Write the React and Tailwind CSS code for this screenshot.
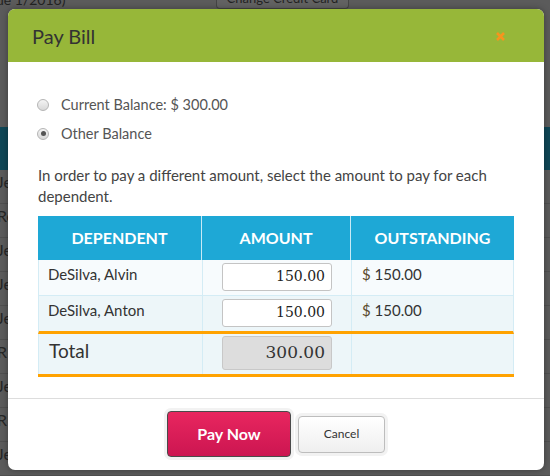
import React from "react";

const font = { fontFamily: "Lato, 'Open Sans', sans-serif" };

function Radio({ checked }) {
  return (
    <span className="flex h-[12px] w-[12px] items-center justify-center rounded-full border border-[#b5b5b5] bg-gradient-to-b from-[#f4f4f4] to-[#d8d8d8]">
      {checked && <span className="h-[5px] w-[5px] rounded-full bg-[#555]" />}
    </span>
  );
}

export default function App() {
  const bgRows = ["Je", "Re", "Je", "Je", "Je", "R", "Je", "R", "Je"];
  return (
    <div className="relative h-[476px] w-[550px] overflow-hidden bg-[#5b5b5b]" style={font}>
      {/* background page */}
      <div className="flex h-[9px] items-end">
        <div className="h-[9px] w-[216px] overflow-hidden">
          <span className="ml-[-4px] block mt-[-7px] text-[14px] leading-[14px] text-[#222]">ue 1/2016)</span>
        </div>
        <div className="h-[9px] w-[133px] overflow-hidden rounded-b-[4px] border border-t-0 border-[#444] bg-[#626262] text-center text-[13px] leading-[4px] text-[#222]">
          <span className="relative top-[-4px]">Change Credit Card</span>
        </div>
      </div>
      <div className="mt-[118px] h-[43px] bg-[#0f4656]" />
      <div className="flex flex-col">
        {bgRows.map((t, i) => (
          <div key={i} className="ml-[-3px] h-[34px] border-b border-[#4f4f4f] pt-[4px] text-[16px] leading-[16px] text-[#262626]">
            {t}
          </div>
        ))}
      </div>

      {/* modal */}
      <div className="absolute left-[8px] top-[9px] flex h-[461px] w-[536px] flex-col overflow-hidden rounded-[7px] bg-white shadow-[0_0_6px_rgba(0,0,0,0.35)]">
        <div className="flex h-[53px] shrink-0 items-center justify-between bg-[#97b739] pl-[24px] pr-[39px]">
          <span className="text-[20px] text-[#333]">Pay Bill</span>
          <svg width="9" height="9" viewBox="0 0 9 9" className="mt-[2px]">
            <path d="M1 1 L8 8 M8 1 L1 8" stroke="#f7941d" strokeWidth="2.6" strokeLinecap="butt" />
          </svg>
        </div>

        <div className="flex flex-col px-[30px] pt-[32px]">
          <label className="flex items-center gap-[12px] text-[14.5px] text-[#555]">
            <span className="ml-[-1px]"><Radio /></span>
            <span>Current Balance: $ 300.00</span>
          </label>
          <label className="mt-[7px] flex items-center gap-[12px] text-[14.5px] text-[#555]">
            <span className="ml-[-1px]"><Radio checked /></span>
            <span>Other Balance</span>
          </label>
          <p className="mt-[20px] text-[15px] leading-[21px] text-[#444]">
            In order to pay a different amount, select the amount to pay for each dependent.
          </p>

          <div className="mt-[9px] w-[476px] border-b-[3px] border-[#ffa200]">
            <div className="grid grid-cols-[164px_149px_163px] bg-[#1ea8d6] text-[16px] font-bold text-white">
              <div className="flex h-[44px] items-center justify-center border-r border-[#c8eaf6]">DEPENDENT</div>
              <div className="flex h-[44px] items-center justify-center border-r border-[#c8eaf6]">AMOUNT</div>
              <div className="flex h-[44px] items-center justify-center">OUTSTANDING</div>
            </div>
            {[
              ["DeSilva, Alvin", "bg-[#f7fbfd]"],
              ["DeSilva, Anton", "bg-[#edf6f9]"],
            ].map(([name, bg], i) => (
              <div
                key={name}
                className={`grid grid-cols-[164px_149px_163px] border-x border-[#d4ecf5] text-[15px] text-[#333] ${bg} ${i === 0 ? "border-b border-b-[#d4ecf5]" : "border-b-[3px] border-b-[#ffa200]"}`}
              >
                <div className="h-[35px] border-r border-[#d4ecf5] pl-[9px] pt-[3px]">{name}</div>
                <div className="flex h-[35px] justify-end border-r border-[#d4ecf5] pr-[19px] pt-[3px]">
                  <div className="flex h-[28px] w-[110px] items-center justify-end rounded-[3px] border border-[#c4c4c4] bg-white pr-[6px] text-[14px] text-[#222]" style={{ fontFamily: "Georgia, 'DejaVu Serif', serif", fontVariantNumeric: "oldstyle-nums" }}>
                    150.00
                  </div>
                </div>
                <div className="pl-[10px] pt-[3px]">
                  <span className="text-[#5a4a2a]">$</span> 150.00
                </div>
              </div>
            ))}
            <div className="grid grid-cols-[164px_149px_163px] border-x border-[#d4ecf5] bg-[#edf6f9]">
              <div className="h-[40px] border-r border-[#d4ecf5] pl-[10px] pt-[3px] text-[19px] text-[#333]">Total</div>
              <div className="flex h-[40px] justify-end border-r border-[#d4ecf5] pr-[19px] pt-[2px]">
                <div className="flex h-[34px] w-[110px] items-center justify-end rounded-[3px] border border-[#c8c8c8] bg-[#dddddd] pr-[6px] text-[17px] text-[#333]" style={{ fontFamily: "Georgia, 'DejaVu Serif', serif" }}>
                  300.00
                </div>
              </div>
              <div />
            </div>
          </div>
        </div>

        <div className="mt-[21px] flex flex-1 items-center justify-center gap-[1px] border-t border-[#dddddd]">
          <div className="rounded-[7px] bg-[#f2f2f2] p-[3px]">
            <button className="h-[46px] w-[124px] rounded-[4px] border border-[#4a4a4a] bg-gradient-to-b from-[#e8265f] to-[#cc1551] text-[16px] font-bold text-white">
              Pay Now
            </button>
          </div>
          <div className="rounded-[7px] bg-[#f2f2f2] p-[3px]">
            <button className="h-[37px] w-[87px] rounded-[4px] border border-[#bdbdbd] bg-gradient-to-b from-white to-[#efefef] text-[12px] text-[#333]">
              Cancel
            </button>
          </div>
        </div>
      </div>
    </div>
  );
}
